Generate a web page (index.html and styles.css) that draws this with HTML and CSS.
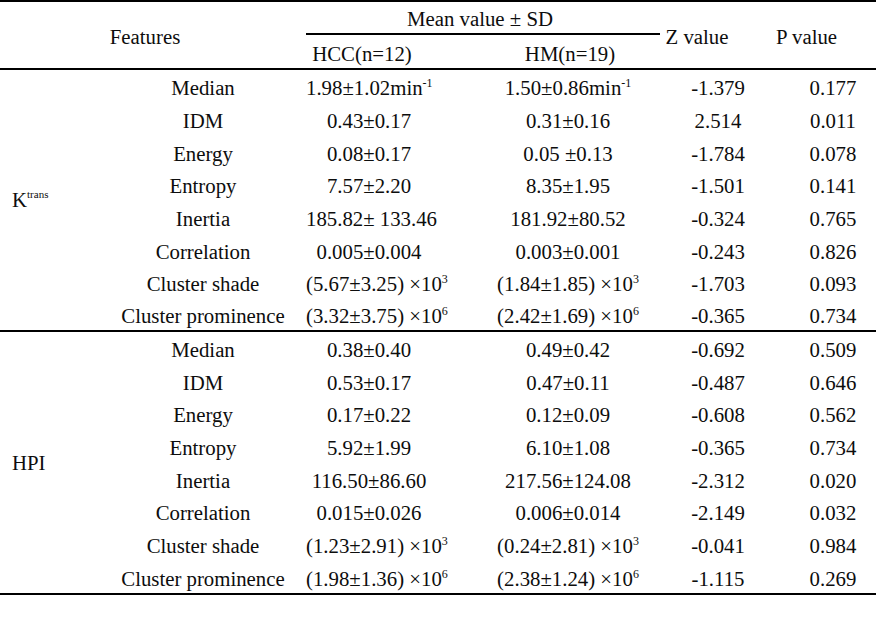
FILE: index.html
```html
<!DOCTYPE html>
<html lang="en">
<head>
<meta charset="utf-8">
<title>Texture features</title>
<link rel="stylesheet" href="styles.css">
</head>
<body>
<table class="stats">
  <colgroup>
    <col class="c-group">
    <col class="c-feat">
    <col class="c-hcc">
    <col class="c-hm">
    <col class="c-z">
    <col class="c-p">
  </colgroup>
  <thead>
    <tr class="h1">
      <th colspan="2" rowspan="2" class="th-features rule">Features</th>
      <th colspan="2" class="th-mean">Mean value ± SD</th>
      <th rowspan="2" class="th-z rule">Z value</th>
      <th rowspan="2" class="th-p rule">P value</th>
    </tr>
    <tr class="h2">
      <th class="th-hcc rule">HCC(n=12)</th>
      <th class="th-hm rule">HM(n=19)</th>
    </tr>
  </thead>
  <tbody class="grp grp-first">
    <tr><td rowspan="8" class="label">K<sup class="sup-trans">trans</sup></td><td class="feat">Median</td><td class="hcc">1.98±1.02min<sup>-1</sup></td><td class="hm">1.50±0.86min<sup>-1</sup></td><td class="z">-1.379</td><td class="p">0.177</td></tr>
    <tr><td class="feat">IDM</td><td class="hcc">0.43±0.17</td><td class="hm">0.31±0.16</td><td class="z">2.514</td><td class="p">0.011</td></tr>
    <tr><td class="feat">Energy</td><td class="hcc">0.08±0.17</td><td class="hm">0.05 ±0.13</td><td class="z">-1.784</td><td class="p">0.078</td></tr>
    <tr><td class="feat">Entropy</td><td class="hcc">7.57±2.20</td><td class="hm">8.35±1.95</td><td class="z">-1.501</td><td class="p">0.141</td></tr>
    <tr><td class="feat">Inertia</td><td class="hcc">185.82± 133.46</td><td class="hm">181.92±80.52</td><td class="z">-0.324</td><td class="p">0.765</td></tr>
    <tr><td class="feat">Correlation</td><td class="hcc">0.005±0.004</td><td class="hm">0.003±0.001</td><td class="z">-0.243</td><td class="p">0.826</td></tr>
    <tr><td class="feat">Cluster shade</td><td class="hcc">(5.67±3.25) ×10<sup>3</sup></td><td class="hm">(1.84±1.85) ×10<sup>3</sup></td><td class="z">-1.703</td><td class="p">0.093</td></tr>
    <tr><td class="feat">Cluster prominence</td><td class="hcc">(3.32±3.75) ×10<sup>6</sup></td><td class="hm">(2.42±1.69) ×10<sup>6</sup></td><td class="z">-0.365</td><td class="p">0.734</td></tr>
  </tbody>
  <tbody class="grp">
    <tr><td rowspan="8" class="label">HPI</td><td class="feat">Median</td><td class="hcc">0.38±0.40</td><td class="hm">0.49±0.42</td><td class="z">-0.692</td><td class="p">0.509</td></tr>
    <tr><td class="feat">IDM</td><td class="hcc">0.53±0.17</td><td class="hm">0.47±0.11</td><td class="z">-0.487</td><td class="p">0.646</td></tr>
    <tr><td class="feat">Energy</td><td class="hcc">0.17±0.22</td><td class="hm">0.12±0.09</td><td class="z">-0.608</td><td class="p">0.562</td></tr>
    <tr><td class="feat">Entropy</td><td class="hcc">5.92±1.99</td><td class="hm">6.10±1.08</td><td class="z">-0.365</td><td class="p">0.734</td></tr>
    <tr><td class="feat">Inertia</td><td class="hcc">116.50±86.60</td><td class="hm">217.56±124.08</td><td class="z">-2.312</td><td class="p">0.020</td></tr>
    <tr><td class="feat">Correlation</td><td class="hcc">0.015±0.026</td><td class="hm">0.006±0.014</td><td class="z">-2.149</td><td class="p">0.032</td></tr>
    <tr><td class="feat">Cluster shade</td><td class="hcc">(1.23±2.91) ×10<sup>3</sup></td><td class="hm">(0.24±2.81) ×10<sup>3</sup></td><td class="z">-0.041</td><td class="p">0.984</td></tr>
    <tr><td class="feat">Cluster prominence</td><td class="hcc">(1.98±1.36) ×10<sup>6</sup></td><td class="hm">(2.38±1.24) ×10<sup>6</sup></td><td class="z">-1.115</td><td class="p">0.269</td></tr>
  </tbody>
</table>
</body>
</html>
```
FILE: styles.css
```css
html, body {
  margin: 0;
  padding: 0;
  background: #ffffff;
}

body {
  font-family: "Liberation Serif", "Times New Roman", serif;
  font-size: 20.8px;
  color: #0d0d0d;
}

.stats {
  width: 876px;
  table-layout: fixed;
  border-collapse: separate;
  border-spacing: 0;
  border-top: 2px solid #000;
  border-bottom: 2px solid #000;
}

.c-group { width: 100px; }
.c-feat  { width: 206px; }
.c-hcc   { width: 126px; }
.c-hm    { width: 228px; }
.c-z     { width: 116px; }
.c-p     { width: 100px; }

.stats th,
.stats td {
  padding: 0;
  font-weight: normal;
  white-space: nowrap;
  line-height: 23px;
  text-align: center;
  vertical-align: middle;
}

.stats .h1 { height: 33px; }
.stats .h2 { height: 35px; }

.stats .th-mean {
  border-bottom: 2px solid #000;
  padding-top: 1px;
  padding-right: 6px;
}

.stats .rule {
  border-bottom: 2px solid #000;
  padding-top: 3px;
}

.stats .th-features { padding-right: 16px; }
.stats .th-hcc { padding-right: 14px; }
.stats .th-hm { padding-left: 48px; }
.stats .th-z { padding-right: 42px; }
.stats .th-p { padding-right: 42px; }

.stats tbody tr { height: 32.7px; }

.stats tbody td { padding-top: 3px; }

.stats .grp-first tr:last-child td,
.stats .grp-first .label {
  border-bottom: 2px solid #000;
}

.stats .label {
  text-align: left;
  padding-left: 12px;
  padding-top: 0;
}

.stats .hm { padding-left: 44px; }
.stats .p { padding-left: 14px; }

.stats sup {
  font-size: 12px;
  line-height: 0;
  vertical-align: 8px;
}

.stats .sup-trans {
  font-size: 11px;
  vertical-align: 9px;
}
```
